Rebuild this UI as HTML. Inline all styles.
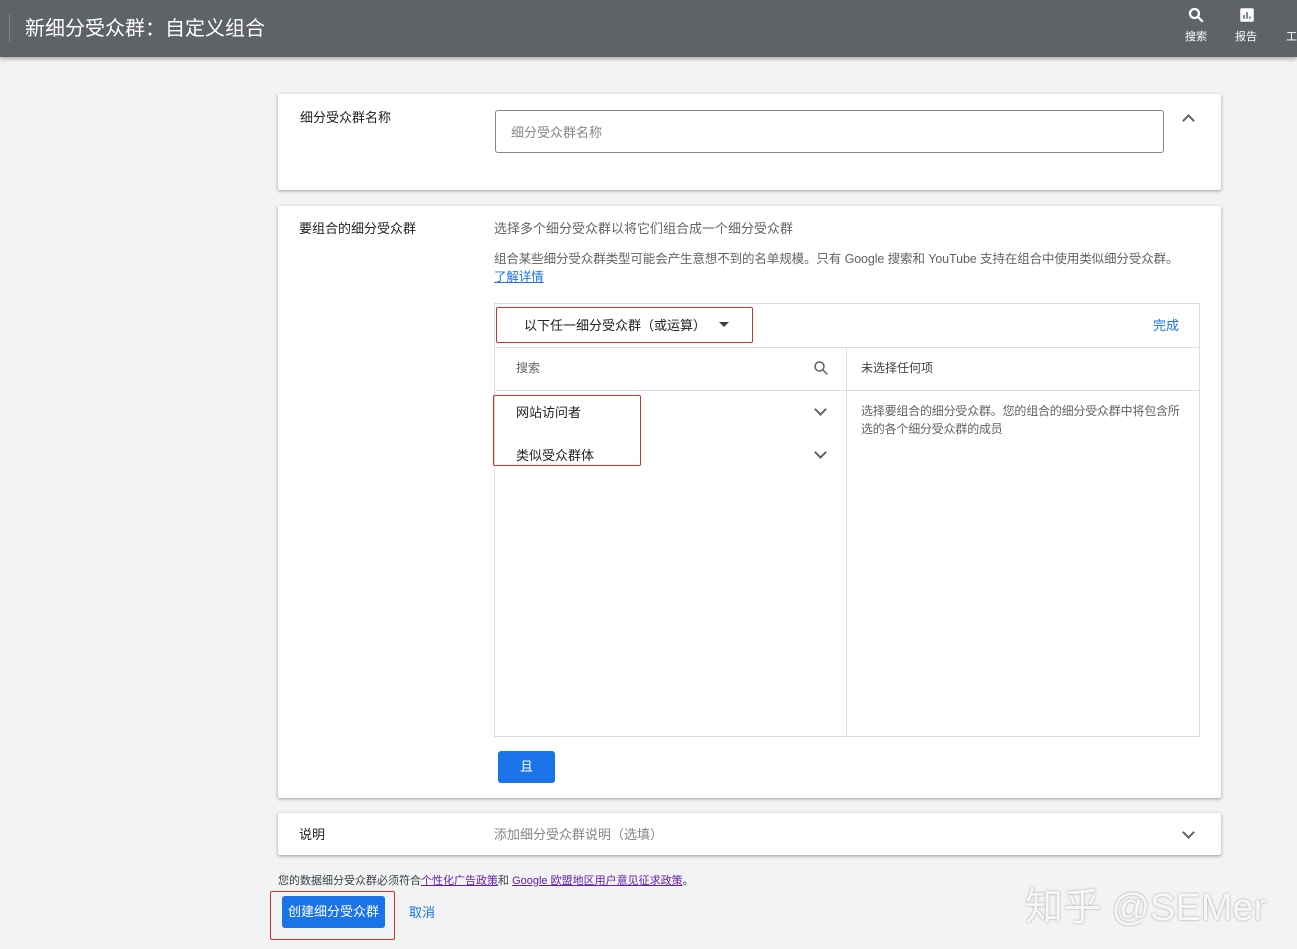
<!DOCTYPE html>
<html><head><meta charset="utf-8"><style>
*{box-sizing:border-box;margin:0;padding:0}
body{width:1297px;height:949px;background:#f1f3f4;font-family:"Liberation Sans","Noto Sans CJK SC",sans-serif;color:#202124;position:relative;overflow:hidden;font-size:13px}
.abs{position:absolute}
.hdr{left:0;top:0;width:1297px;height:57px;background:#5f6368;box-shadow:0 2px 4px rgba(0,0,0,.3)}
.card{background:#fff;box-shadow:0 1px 2px rgba(60,64,67,.3),0 1px 3px 1px rgba(60,64,67,.15);border-radius:2px}
.red{border:1.5px solid #d93025;border-radius:2px}
.chev{width:9px;height:9px;border-right:2px solid #5f6368;border-bottom:2px solid #5f6368}
</style></head><body>
<div class="abs hdr">
 <div class="abs" style="left:9px;top:14px;width:1px;height:28px;background:#80868b"></div>
 <div class="abs" style="left:25px;top:12px;color:#fff;font-size:20px">新细分受众群：自定义组合</div>
 <svg class="abs" style="left:1187px;top:6px" width="18" height="18" viewBox="0 0 24 24"><circle cx="10" cy="10" r="6" fill="none" stroke="#fff" stroke-width="3"/><path d="M14 14l7 7" stroke="#fff" stroke-width="3"/></svg>
 <div class="abs" style="left:1185px;top:28px;color:#fff;font-size:11px">搜索</div>
 <svg class="abs" style="left:1238px;top:6px" width="18" height="18" viewBox="0 0 24 24"><rect x="3" y="3" width="18" height="18" rx="2" fill="#fff"/><path d="M8 17V12M12 17V8M16 17v-3" stroke="#5f6368" stroke-width="2"/></svg>
 <div class="abs" style="left:1235px;top:28px;color:#fff;font-size:11px">报告</div>
 <div class="abs" style="left:1286px;top:28px;color:#fff;font-size:11px">工</div>
</div>

<div class="abs card" style="left:278px;top:94px;width:943px;height:96px"></div>
<div class="abs" style="left:300px;top:107px;font-size:13px">细分受众群名称</div>
<div class="abs" style="left:495px;top:110px;width:669px;height:43px;border:1px solid #80868b;border-radius:3px;color:#80868b;padding:11px 15px">细分受众群名称</div>
<div class="abs chev" style="left:1184px;top:116px;transform:rotate(225deg)"></div>

<div class="abs card" style="left:278px;top:206px;width:943px;height:592px"></div>
<div class="abs" style="left:299px;top:218px">要组合的细分受众群</div>
<div class="abs" style="left:494px;top:218px;color:#5f6368">选择多个细分受众群以将它们组合成一个细分受众群</div>
<div class="abs" style="left:494px;top:250px;color:#5f6368;line-height:18px;width:715px;font-size:12.5px;letter-spacing:-0.1px;white-space:nowrap">组合某些细分受众群类型可能会产生意想不到的名单规模。只有 Google 搜索和 YouTube 支持在组合中使用类似细分受众群。<br><span style="color:#1a73e8;text-decoration:underline">了解详情</span></div>
<div class="abs" style="left:494px;top:303px;width:706px;height:434px;border:1px solid #dadce0"></div>
<div class="abs" style="left:494px;top:347px;width:706px;height:1px;background:#dadce0"></div>
<div class="abs" style="left:494px;top:390px;width:353px;height:1px;background:#dadce0"></div>
<div class="abs" style="left:846px;top:347px;width:1px;height:390px;background:#dadce0"></div>
<div class="abs" style="left:846px;top:390px;width:354px;height:1px;background:#dadce0"></div>
<div class="abs red" style="left:496px;top:307px;width:257px;height:36px"></div>
<div class="abs" style="left:524px;top:315px;font-size:13px">以下任一细分受众群（或运算）</div>
<div class="abs" style="left:719px;top:322px;border-left:5px solid transparent;border-right:5px solid transparent;border-top:5px solid #3c4043"></div>
<div class="abs" style="left:1153px;top:315px;color:#1a73e8">完成</div>
<div class="abs" style="left:516px;top:359px;color:#5f6368;font-size:12px">搜索</div>
<svg class="abs" style="left:812px;top:359px" width="18" height="18" viewBox="0 0 24 24"><circle cx="10" cy="10" r="6" fill="none" stroke="#5f6368" stroke-width="2"/><path d="M14.5 14.5l6 6" stroke="#5f6368" stroke-width="2"/></svg>
<div class="abs" style="left:861px;top:359px;color:#3c4043;font-size:12px">未选择任何项</div>
<div class="abs red" style="left:493px;top:395px;width:148px;height:71px"></div>
<div class="abs" style="left:516px;top:402px">网站访问者</div>
<div class="abs" style="left:516px;top:445px">类似受众群体</div>
<div class="abs chev" style="left:816px;top:405px;transform:rotate(45deg)"></div>
<div class="abs chev" style="left:816px;top:448px;transform:rotate(45deg)"></div>
<div class="abs" style="left:861px;top:402px;color:#5f6368;font-size:12px;line-height:18px;width:325px;letter-spacing:-0.2px">选择要组合的细分受众群。您的组合的细分受众群中将包含所选的各个细分受众群的成员</div>
<div class="abs" style="left:498px;top:751px;width:57px;height:32px;background:#1a73e8;border-radius:3px;color:#fff;text-align:center;line-height:32px">且</div>

<div class="abs card" style="left:278px;top:813px;width:943px;height:42px"></div>
<div class="abs" style="left:299px;top:824px">说明</div>
<div class="abs" style="left:494px;top:824px;color:#80868b">添加细分受众群说明（选填）</div>
<div class="abs chev" style="left:1184px;top:828px;transform:rotate(45deg)"></div>

<div class="abs" style="left:278px;top:872px;font-size:11px;color:#3c4043">您的数据细分受众群必须符合<span style="color:#681da8;text-decoration:underline">个性化广告政策</span>和 <span style="color:#681da8;text-decoration:underline">Google 欧盟地区用户意见征求政策</span>。</div>
<div class="abs red" style="left:270px;top:891px;width:125px;height:49px"></div>
<div class="abs" style="left:282px;top:896px;width:103px;height:32px;background:#1a73e8;border-radius:3px;color:#fff;text-align:center;line-height:32px;font-size:13px">创建细分受众群</div>
<div class="abs" style="left:409px;top:902px;color:#1a73e8">取消</div>
<div class="abs" style="left:1025px;top:876px;font-size:38px;color:rgba(255,255,255,.9);text-shadow:0 0 2px #999">知乎 @SEMer</div>
</body></html>
